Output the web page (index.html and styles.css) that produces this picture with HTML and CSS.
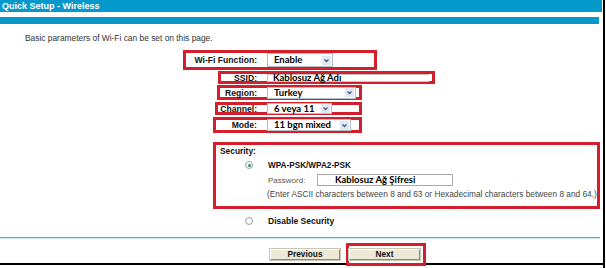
FILE: index.html
```html
<!DOCTYPE html>
<html lang="en">
<head>
  <meta charset="UTF-8">
  <title>Quick Setup - Wireless</title>
  <link rel="stylesheet" href="styles.css">
</head>
<body>
  <div class="frame">
    <div class="page">

      <!-- Title bars -->
      <div class="title">Quick Setup - Wireless</div>
      <div class="title-bar"></div>

      <p class="intro">Basic parameters of Wi-Fi can be set on this page.</p>

      <!-- Basic settings, each row marked with a red box -->
      <div class="row row-wifi">
        <span class="label">Wi-Fi Function:</span>
        <span class="select sel-wifi">
          <span class="value">Enable</span>
          <span class="arrow"><svg viewBox="0 0 9 9" width="9" height="9"><path d="M2.5 3.5 L4.5 5.5 L6.5 3.5" fill="none" stroke="#4a5f87" stroke-width="1.3"/></svg></span>
        </span>
      </div>

      <div class="row row-ssid">
        <span class="label">SSID:</span>
        <span class="input ssid-input">Kablosuz Ağ Adı</span>
      </div>

      <div class="row row-region">
        <span class="label">Region:</span>
        <span class="select sel-region">
          <span class="value">Turkey</span>
          <span class="arrow"><svg viewBox="0 0 9 9" width="9" height="9"><path d="M2.5 3.5 L4.5 5.5 L6.5 3.5" fill="none" stroke="#4a5f87" stroke-width="1.3"/></svg></span>
        </span>
      </div>

      <div class="row row-channel">
        <span class="label">Channel:</span>
        <span class="select sel-channel">
          <span class="value">6 veya 11</span>
          <span class="arrow"><svg viewBox="0 0 9 9" width="9" height="9"><path d="M2.5 3.5 L4.5 5.5 L6.5 3.5" fill="none" stroke="#4a5f87" stroke-width="1.3"/></svg></span>
        </span>
      </div>

      <div class="row row-mode">
        <span class="label">Mode:</span>
        <span class="select sel-mode">
          <span class="value">11 bgn mixed</span>
          <span class="arrow"><svg viewBox="0 0 9 9" width="9" height="9"><path d="M2.5 3.5 L4.5 5.5 L6.5 3.5" fill="none" stroke="#4a5f87" stroke-width="1.3"/></svg></span>
        </span>
      </div>

      <!-- Security -->
      <div class="security">
        <div class="sec-title">Security:</div>
        <div class="option">
          <span class="radio checked"></span>
          <span class="opt-label">WPA-PSK/WPA2-PSK</span>
        </div>
        <div class="pass-row">
          <span class="pass-label">Password:</span>
          <span class="input pass-input">Kablosuz Ağ Şifresi</span>
        </div>
        <div class="note">(Enter ASCII characters between 8 and 63 or Hexadecimal characters between 8 and 64.)</div>
      </div>

      <div class="option disable">
        <span class="radio"></span>
        <span class="opt-label">Disable Security</span>
      </div>

      <div class="separator"></div>

      <div class="buttons">
        <button class="btn">Previous</button>
        <span class="mark"><button class="btn">Next</button></span>
      </div>

    </div>
  </div>
</body>
</html>
```

FILE: styles.css
```css
/* General page */
body {
  margin: 0;
  background-color: #fff;
  font-family: 'Liberation Sans', Arial, sans-serif;
  font-size: 8.5px;
  color: #222;
}

.frame {
  width: 603px;
  height: 268px;
  border-right: 2px solid #000;
}

.page {
  height: 263px;
  border-bottom: 2px solid #000;
}

/* Title bars */
.title {
  height: 12px;
  line-height: 12px;
  padding-left: 2px;
  background-color: #0599cb;
  color: #fff;
  font-weight: bold;
  font-size: 9px;
  width: 600px;
}

.title-bar {
  height: 7px;
  margin-top: 5px;
  width: 599px;
  background-color: #0599cb;
}

.intro {
  margin: 9px 0 0 25px;
  line-height: 11px;
  font-size: 8.4px;
  color: #333;
}

/* Red marked rows */
.row {
  display: flex;
  align-items: center;
  border: 3px solid #d21f2b;
  box-sizing: border-box;
}

.label {
  text-align: right;
  font-weight: bold;
  font-size: 8.6px;
  color: #111;
  margin-right: 10px;
  flex-shrink: 0;
  white-space: nowrap;
}

.row-wifi { margin: 6px 0 0 183px; width: 194px; height: 20px; }
.row-wifi .label { width: 71px; }

.row-ssid { margin: 1px 0 0 218px; width: 217px; height: 13px; }
.row-ssid .label { width: 36px; }

.row-region { margin: 1px 0 0 217px; width: 145px; height: 15px; }
.row-region .label { width: 37px; }

.row-channel { margin: 2px 0 0 215px; width: 147px; height: 13px; }
.row-channel .label { width: 39px; }

.row-mode { margin: 2px 0 0 213px; width: 149px; height: 16px; }
.row-mode .label { width: 41px; }

/* Fake select boxes */
.select {
  display: flex;
  align-items: center;
  box-sizing: border-box;
  border: 1px solid #b7bcc6;
  background-color: #fff;
  height: 12px;
}

.value, .input {
  font-family: Lato, 'Open Sans', sans-serif;
  font-weight: bold;
  font-size: 9.5px;
  color: #000;
  line-height: 10px;
  white-space: nowrap;
}

.value {
  flex: 1;
  padding-left: 6px;
}

.arrow {
  width: 9px;
  height: 9px;
  margin-right: 1px;
  background-color: #dfe7f4;
  border-radius: 1px;
  display: flex;
}

.sel-wifi { width: 66px; height: 14px; }
.sel-region { width: 89px; }
.sel-channel { width: 65px; height: 11px; }
.sel-mode { width: 84px; }

.input {
  box-sizing: border-box;
  border: 1px solid #c4c4c4;
  background-color: #fff;
  display: flex;
  align-items: center;
}

.ssid-input {
  width: 162px;
  height: 8px;
  padding-left: 5px;
  border-right: none;
}

/* Security */
.security {
  margin: 9px 0 0 213px;
  width: 387px;
  height: 67px;
  box-sizing: border-box;
  border: 3px solid #d21f2b;
  padding: 1px 0 0 4px;
}

.sec-title {
  font-weight: bold;
  font-size: 8.4px;
  line-height: 10px;
  color: #111;
}

.option {
  display: flex;
  align-items: center;
  height: 10px;
  margin: 4px 0 0 25px;
}

.opt-label {
  font-weight: bold;
  font-size: 8.2px;
  color: #111;
}

.radio {
  width: 8px;
  height: 8px;
  box-sizing: border-box;
  border: 1px solid #9aa3ab;
  border-radius: 50%;
  background-color: #f6f6f6;
  margin-right: 15px;
  position: relative;
}

.radio.checked::after {
  content: "";
  position: absolute;
  left: 1.5px;
  top: 1.5px;
  width: 3px;
  height: 3px;
  border-radius: 50%;
  background-color: #2f9a3b;
}

.pass-row {
  display: flex;
  align-items: center;
  margin: 4px 0 0 48px;
  height: 12px;
}

.pass-label {
  color: #555;
  font-size: 8px;
  width: 49px;
}

.pass-input {
  width: 136px;
  height: 12px;
  padding-left: 17px;
  border-color: #a9a9a9;
}

.note {
  margin: 3px 0 0 47px;
  line-height: 10px;
  font-size: 8.3px;
  white-space: nowrap;
  color: #444;
}

.disable {
  margin: 6px 0 0 245px;
  height: 12px;
}

.disable .opt-label {
  font-size: 8.5px;
}

.separator {
  margin-top: 10px;
  width: 600px;
  height: 1px;
  background-color: #4aaec4;
  border-bottom: 1px solid #cdeef4;
}

/* Buttons */
.buttons {
  display: flex;
  align-items: center;
  margin: 4px 0 0 270px;
  height: 23px;
}

.btn {
  width: 70px;
  height: 11px;
  padding: 0;
  font-family: 'Liberation Sans', Arial, sans-serif;
  font-size: 8.3px;
  font-weight: bold;
  line-height: 9px;
  color: #111;
  background-color: #ece9d8;
  border: 1px solid;
  border-color: #fff #8e8b7e #8e8b7e #fff;
  box-shadow: 0 0 0 1px #c9c5b5;
}

.mark {
  margin-left: 6px;
  height: 23px;
  box-sizing: border-box;
  border: 3px solid #d21f2b;
  padding: 0 3px 0 0;
  display: flex;
  align-items: center;
  width: 80px;
}

.mark .btn {
  width: 71px;
}
```
